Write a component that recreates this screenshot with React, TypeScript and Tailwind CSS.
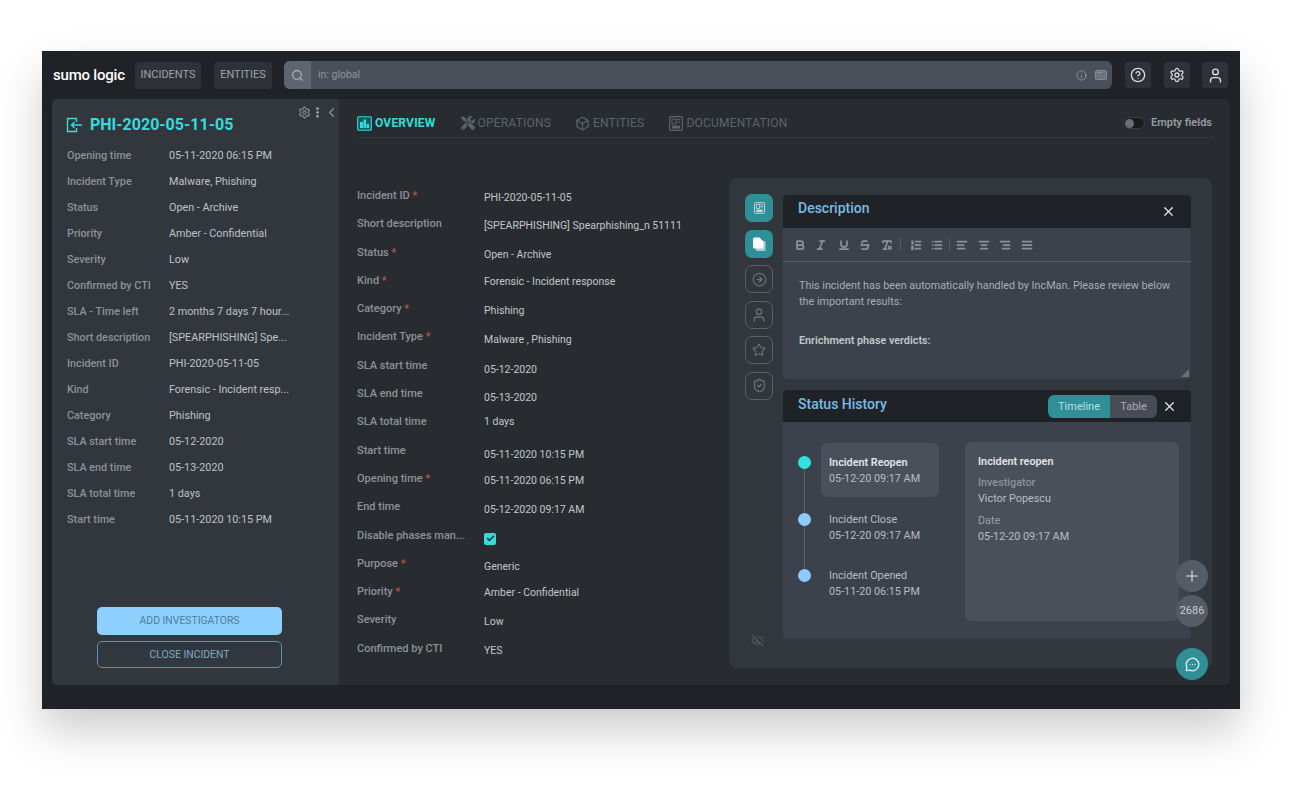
import React from "react"
import {
  AlignCenter, AlignJustify, AlignLeft, AlignRight, Bold, Box, ChevronLeft, CircleArrowRight, CircleHelp, EyeOff,
  Info, Italic, List, ListOrdered, MessageCircleMore, MoreVertical, Plus, RemoveFormatting, Search, Settings,
  ShieldCheck, Star, Strikethrough, Underline, User, X, Check,
} from "lucide-react"
import { FaTools } from "react-icons/fa"

const sideRows = [
  ["Opening time", "05-11-2020 06:15 PM"],
  ["Incident Type", "Malware, Phishing"],
  ["Status", "Open - Archive"],
  ["Priority", "Amber - Confidential"],
  ["Severity", "Low"],
  ["Confirmed by CTI", "YES"],
  ["SLA - Time left", "2 months 7 days 7 hour..."],
  ["Short description", "[SPEARPHISHING] Spe..."],
  ["Incident ID", "PHI-2020-05-11-05"],
  ["Kind", "Forensic - Incident resp..."],
  ["Category", "Phishing"],
  ["SLA start time", "05-12-2020"],
  ["SLA end time", "05-13-2020"],
  ["SLA total time", "1 days"],
  ["Start time", "05-11-2020 10:15 PM"],
]

const formRows = [
  { label: "Incident ID", req: true, value: "PHI-2020-05-11-05", cls: "mt-[2px]" },
  { label: "Short description", value: "[SPEARPHISHING] Spearphishing_n 51111", cls: "mt-[2px]" },
  { label: "Status", req: true, value: "Open - Archive", cls: "mt-[2px]" },
  { label: "Kind", req: true, value: "Forensic - Incident response", cls: "mt-[1px]" },
  { label: "Category", req: true, value: "Phishing", cls: "mt-[2px]" },
  { label: "Incident Type", req: true, value: "Malware , Phishing", cls: "mt-[3px]" },
  { label: "SLA start time", value: "05-12-2020", cls: "mt-[4px]" },
  { label: "SLA end time", value: "05-13-2020", cls: "mt-[4px]" },
  { label: "SLA total time", value: "1 days", cls: "mt-0" },
  { label: "Start time", value: "05-11-2020 10:15 PM", cls: "mt-[4px]" },
  { label: "Opening time", req: true, value: "05-11-2020 06:15 PM", cls: "mt-[2px]" },
  { label: "End time", value: "05-12-2020 09:17 AM", cls: "mt-[3px]" },
  { label: "Disable phases man...", check: true, cls: "mt-[-1px]" },
  { label: "Purpose", req: true, value: "Generic", cls: "mt-[3px]" },
  { label: "Priority", req: true, value: "Amber - Confidential", cls: "mt-[1px]" },
  { label: "Severity", value: "Low", cls: "mt-[2px]" },
  { label: "Confirmed by CTI", value: "YES", cls: "mt-[2px]" },
]

const steps = [
  { t: "Incident Reopen", d: "05-12-20 09:17 AM", on: true, first: true },
  { t: "Incident Close", d: "05-12-20 09:17 AM" },
  { t: "Incident Opened", d: "05-11-20 06:15 PM", last: true },
]

const OverviewIcon = () => (
  <svg width="15" height="15" viewBox="0 0 15 15" fill="none">
    <rect x="0.7" y="0.7" width="13.6" height="13.6" rx="1" stroke="#2fdcdc" strokeWidth="1.1" fill="#17595f" />
    <path d="M3 12V6h3v6zM6.5 12V3.5h2.5V12zM9.5 12V8H12v4z" fill="#35dede" />
  </svg>
)

const DocIcon = ({ color = "#5d636c", size = 14 }: { color?: string; size?: number }) => (
  <svg width={size} height={size + 1} viewBox="0 0 14 15" fill="none">
    <rect x="0.7" y="0.7" width="12.6" height="13.6" rx="1" stroke={color} strokeWidth="1.2" />
    <rect x="3" y="3" width="4" height="5" stroke={color} strokeWidth="1" />
    <rect x="8.2" y="3" width="3" height="1.2" fill={color} />
    <rect x="8.2" y="5.4" width="3" height="1.2" fill={color} />
    <rect x="3" y="9.6" width="8" height="3" fill={color} />
  </svg>
)

const PagesIcon = () => (
  <svg width="16" height="16" viewBox="0 0 16 16" fill="none">
    <path d="M5 5h8.5a1 1 0 0 1 1 1v8a1 1 0 0 1-1 1H6a1 1 0 0 1-1-1z" fill="#a9cfd2" />
    <path d="M3.5 1.5h5l4 4V11a1.5 1.5 0 0 1-1.5 1.5H3.5A1.5 1.5 0 0 1 2 11V3a1.5 1.5 0 0 1 1.5-1.5z" fill="#ffffff" />
  </svg>
)

const BackIcon = () => (
  <svg width="16" height="16" viewBox="0 0 16 16" fill="none" stroke="#34dcdc" strokeWidth="1.4">
    <path d="M10.5 5V1.5h-9v13h9V11" />
    <path d="M16 8H5.5M8.5 5l-3 3 3 3" />
  </svg>
)

const Tab = ({ icon, text, active }: { icon: React.ReactNode; text: string; active?: boolean }) => (
  <div className={`flex items-center gap-[3px] text-[12px] tracking-[0.2px] ${active ? "font-bold text-[#34dcdc]" : "text-[#5d636c]"}`}>
    {icon}
    <span>{text}</span>
  </div>
)

const RailButton = ({ children, active }: { children: React.ReactNode; active?: boolean }) => (
  <div className={`w-[28px] h-[28px] rounded-[7px] flex items-center justify-center ${active ? "bg-[#2f8f96]" : "border border-[#5a606a]"}`}>
    {children}
  </div>
)

const tool = "#8a9099"

export default function App() {
  return (
    <div className="w-[1300px] h-[786px] bg-white pt-[51px] pl-[42px] overflow-hidden font-['Roboto',sans-serif]">
      <div className="relative w-[1198px] h-[658px] bg-[#1f2226] shadow-[0_22px_42px_rgba(0,0,0,0.2)] flex flex-col">
        {/* top bar */}
        <header className="h-[48px] flex items-center pl-[11px] pr-[12px]">
          <span className="w-[82px] text-[15px] font-medium tracking-[-0.2px] text-white">sumo logic</span>
          <div className="w-[66px] h-[27px] rounded-[3px] bg-[#2e3238] text-[11px] text-[#9ea3aa] flex items-center justify-center">INCIDENTS</div>
          <div className="ml-[13px] w-[58px] h-[27px] rounded-[3px] bg-[#2e3238] text-[11px] text-[#9ea3aa] flex items-center justify-center">ENTITIES</div>
          <div className="ml-[12px] w-[828px] h-[28px] rounded-[6px] bg-[#4a505a] flex items-center overflow-hidden">
            <div className="w-[27px] h-full bg-[#5f656f] flex items-center justify-center">
              <Search size={13} color="#b6bac0" />
            </div>
            <span className="ml-[7px] mb-[1px] text-[10.5px] text-[#8f949c]">in: global</span>
            <div className="ml-auto flex items-center gap-[8px] pr-[5px]">
              <Info size={11} color="#8f949c" />
              <svg width="12" height="10" viewBox="0 0 12 10">
                <rect x="0.5" y="0.5" width="11" height="9" rx="1" fill="#6f747c" stroke="#868b92" />
                <rect x="2" y="2" width="5" height="1.2" fill="#8c9198" />
              </svg>
            </div>
          </div>
          <div className="ml-[13px] w-[26px] h-[26px] rounded-[3px] bg-[#2e3238] flex items-center justify-center">
            <CircleHelp size={16} color="#d8dadd" />
          </div>
          <div className="ml-[13px] w-[26px] h-[26px] rounded-[3px] bg-[#2e3238] flex items-center justify-center">
            <Settings size={16} color="#d8dadd" />
          </div>
          <div className="ml-[12px] w-[26px] h-[26px] rounded-[3px] bg-[#2e3238] flex items-center justify-center">
            <User size={17} color="#d8dadd" />
          </div>
        </header>

        {/* main */}
        <main className="mx-[10px] h-[586px] rounded-[5px] bg-[#282c30] flex overflow-hidden">
          <aside className="relative w-[287px] shrink-0 bg-[#32373e] flex flex-col pl-[14px] pr-[50px]">
            <div className="absolute top-[6px] right-0 flex items-center">
              <Settings size={13} color="#8a8f96" />
              <MoreVertical size={13} color="#a8acb2" strokeWidth={3} />
              <ChevronLeft size={15} color="#8a8f96" />
            </div>
            <div className="mt-[16px] flex items-center gap-[8px] text-[#34dcdc]">
              <BackIcon />
              <span className="text-[16px] leading-[20px] font-bold">PHI-2020-05-11-05</span>
            </div>
            <div className="mt-[8px] pl-[1px] flex flex-col">
              {sideRows.map(([k, v]) => (
                <div key={k} className="flex items-center h-[26px] text-[10.8px]">
                  <span className="w-[102px] shrink-0 font-medium text-[#8d9299]">{k}</span>
                  <span className="whitespace-nowrap text-[#bfc2c7]">{v}</span>
                </div>
              ))}
            </div>
            <div className="mt-auto mb-[17px] ml-[31px] w-[185px] flex flex-col gap-[6px]">
              <button className="h-[28px] rounded-[5px] bg-[#8dd0ff] text-[10.4px] text-[#4f7d9c]">ADD INVESTIGATORS</button>
              <button className="h-[27px] pt-[1px] rounded-[5px] border border-[#5f8fb5] text-[10.4px] text-[#7ea9c6]">CLOSE INCIDENT</button>
            </div>
          </aside>

          <section className="flex-1 min-w-0 pl-[18px] pr-[16px] flex flex-col">
            <div className="h-[39px] shrink-0 pt-[10px] border-b border-[#33383d] flex items-center">
              <Tab active icon={<OverviewIcon />} text="OVERVIEW" />
              <div className="ml-[25px]"><Tab icon={<FaTools size={14} color="#5d636c" />} text="OPERATIONS" /></div>
              <div className="ml-[24px]"><Tab icon={<Box size={15} color="#5d636c" />} text="ENTITIES" /></div>
              <div className="ml-[25px]"><Tab icon={<DocIcon />} text="DOCUMENTATION" /></div>
              <div className="ml-auto mr-[2px] flex items-center gap-[6px]">
                <div className="w-[22px] h-[12px] rounded-full bg-[#181a1d] border border-[#3a3f45] flex items-center">
                  <div className="w-[9px] h-[9px] rounded-full bg-[#6a6f77] ml-[1px]" />
                </div>
                <span className="text-[11px] font-semibold text-[#979ca3]">Empty fields</span>
              </div>
            </div>

            <div className="flex mt-[40px]">
              <div className="w-[372px] shrink-0 pt-[11px] flex flex-col">
                {formRows.map(r => (
                  <div key={r.label} className="flex items-start h-[28.3px] text-[11px] leading-[14px]">
                    <span className="w-[127px] shrink-0 font-medium text-[#8d9299]">
                      {r.label}
                      {r.req && <span className="text-[#b5574f]"> *</span>}
                    </span>
                    {r.check ? (
                      <span className={`${r.cls} w-[12px] h-[12px] rounded-[2px] bg-[#34dcdc] flex items-center justify-center translate-y-[5px]`}>
                        <Check size={9} color="#17373a" strokeWidth={4} />
                      </span>
                    ) : (
                      <span className={`${r.cls} text-[10.5px] text-[#c3c6ca]`}>{r.value}</span>
                    )}
                  </div>
                ))}
              </div>

              {/* grey card */}
              <div className="w-[483px] h-[490px] rounded-[8px] bg-[#32373e] pt-[16px] pl-[16px] flex">
                <div className="w-[28px] shrink-0 flex flex-col gap-[7.6px] h-full">
                  <RailButton active><DocIcon color="#c9dcde" size={11} /></RailButton>
                  <RailButton active><PagesIcon /></RailButton>
                  <RailButton><CircleArrowRight size={15} color="#6a7079" /></RailButton>
                  <RailButton><User size={16} color="#6a7079" /></RailButton>
                  <RailButton><Star size={14} color="#6a7079" /></RailButton>
                  <RailButton><ShieldCheck size={15} color="#6a7079" /></RailButton>
                  <div className="mt-[226px] pr-[4px] flex justify-center"><EyeOff size={13} color="#555b64" /></div>
                </div>

                <div className="ml-[10px] w-[408px] flex flex-col">
                  {/* description */}
                  <div className="mt-[1px] h-[184px] rounded-[4px] overflow-hidden bg-[#3c424c] flex flex-col relative">
                    <div className="h-[33px] shrink-0 bg-[#1f2226] flex items-center pl-[15px] pr-[15px]">
                      <span className="pb-[7px] text-[14px] font-medium text-[#77bce8]">Description</span>
                      <X size={15} color="#e4e6e8" className="ml-auto" />
                    </div>
                    <div className="h-[34px] shrink-0 border-b border-[#555b65] flex items-center pl-[11px]">
                      <Bold size={12} color={tool} strokeWidth={3.5} />
                      <Italic size={12} color={tool} strokeWidth={3.5} className="ml-[9px]" />
                      <Underline size={12} color={tool} strokeWidth={3.5} className="ml-[11px]" />
                      <Strikethrough size={12} color={tool} strokeWidth={3.5} className="ml-[9px]" />
                      <RemoveFormatting size={12} color={tool} strokeWidth={3.5} className="ml-[10px]" />
                      <div className="ml-[7px] w-px h-[13px] bg-[#555b65]" />
                      <ListOrdered size={12} color={tool} strokeWidth={3.5} className="ml-[9px]" />
                      <List size={12} color={tool} strokeWidth={3.5} className="ml-[9px]" />
                      <div className="ml-[6px] w-px h-[13px] bg-[#555b65]" />
                      <AlignLeft size={12} color={tool} strokeWidth={3.5} className="ml-[6px]" />
                      <AlignCenter size={12} color={tool} strokeWidth={3.5} className="ml-[10px]" />
                      <AlignRight size={12} color={tool} strokeWidth={3.5} className="ml-[9px]" />
                      <AlignJustify size={12} color={tool} strokeWidth={3.5} className="ml-[10px]" />
                    </div>
                    <div className="pl-[16px] pr-[16px] pt-[16px] text-[10.8px] leading-[16px] text-[#a9adb3]">
                      <p>This incident has been automatically handled by IncMan. Please review below the important results:</p>
                      <p className="mt-[23px] font-semibold text-[#c3c6ca]">Enrichment phase verdicts:</p>
                    </div>
                    <div className="absolute right-[2px] bottom-[2px] w-0 h-0 border-l-[8px] border-l-transparent border-b-[8px] border-b-[#6b7079]" />
                  </div>

                  {/* status history */}
                  <div className="mt-[11px] h-[249px] rounded-[4px] overflow-hidden bg-[#3c424c] flex flex-col">
                    <div className="h-[32px] shrink-0 bg-[#1f2226] flex items-center pl-[15px] pr-[14px]">
                      <span className="pb-[4px] text-[14px] font-medium text-[#77bce8]">Status History</span>
                      <div className="ml-auto flex h-[23px] rounded-[6px] overflow-hidden text-[11px]">
                        <div className="w-[62px] pt-[3px] bg-[#2f8f96] text-[#b6dfe0] flex items-center justify-center">Timeline</div>
                        <div className="w-[47px] pt-[3px] bg-[#474c56] text-[#a9adb3] flex items-center justify-center">Table</div>
                      </div>
                      <X size={15} color="#e4e6e8" className="ml-[5px]" />
                    </div>
                    <div className="flex pl-[15px] pt-[21px]">
                      <div className="w-[167px] shrink-0 flex flex-col">
                        {steps.map(s => (
                          <div key={s.t} className="flex h-[56.6px]">
                            <div className="w-[13px] shrink-0 flex flex-col items-center">
                              <div className={`w-px h-[13px] shrink-0 ${s.first ? "" : "bg-[#5a616b]"}`} />
                              <div className={`w-[13px] h-[13px] shrink-0 rounded-full ${s.on ? "bg-[#2fe3e0]" : "bg-[#8dcbfa]"}`} />
                              {!s.last && <div className="w-px flex-1 bg-[#5a616b]" />}
                            </div>
                            <div className={`ml-[10px] w-[118px] h-[54px] rounded-[6px] pl-[8px] pt-[12px] text-[10.8px] leading-[16px] text-[#b9bcc1] ${s.on ? "bg-[#4a505a]" : ""}`}>
                              <div className={s.on ? "font-semibold text-[#e2e4e6]" : ""}>{s.t}</div>
                              <div>{s.d}</div>
                            </div>
                          </div>
                        ))}
                      </div>
                      <div className="w-[214px] h-[179px] mt-[-1px] rounded-[6px] bg-[#4a505a] pl-[13px] pt-[12px] text-[10.8px] leading-[16px] text-[#b9bcc1]">
                        <div className="font-semibold text-[#e2e4e6]">Incident reopen</div>
                        <div className="mt-[5px] font-medium text-[#8d9299]">Investigator</div>
                        <div>Victor Popescu</div>
                        <div className="mt-[6px] text-[#9a9ea4]">Date</div>
                        <div>05-12-20 09:17 AM</div>
                      </div>
                    </div>
                  </div>
                </div>
              </div>
            </div>
          </section>
        </main>

        {/* floating buttons */}
        <div className="absolute left-[1134px] top-[509px] w-[32px] h-[32px] rounded-full bg-[#565c66] flex items-center justify-center">
          <Plus size={18} color="#dfe1e4" strokeWidth={1.5} />
        </div>
        <div className="absolute left-[1134px] top-[544px] w-[32px] h-[32px] rounded-full bg-[#565c66] flex items-center justify-center text-[11px] text-[#c9cccf]">2686</div>
        <div className="absolute left-[1134px] top-[597px] w-[32px] h-[32px] rounded-full bg-[#2f8f96] flex items-center justify-center">
          <MessageCircleMore size={15} color="#e8f3f4" />
        </div>
      </div>
    </div>
  )
}
